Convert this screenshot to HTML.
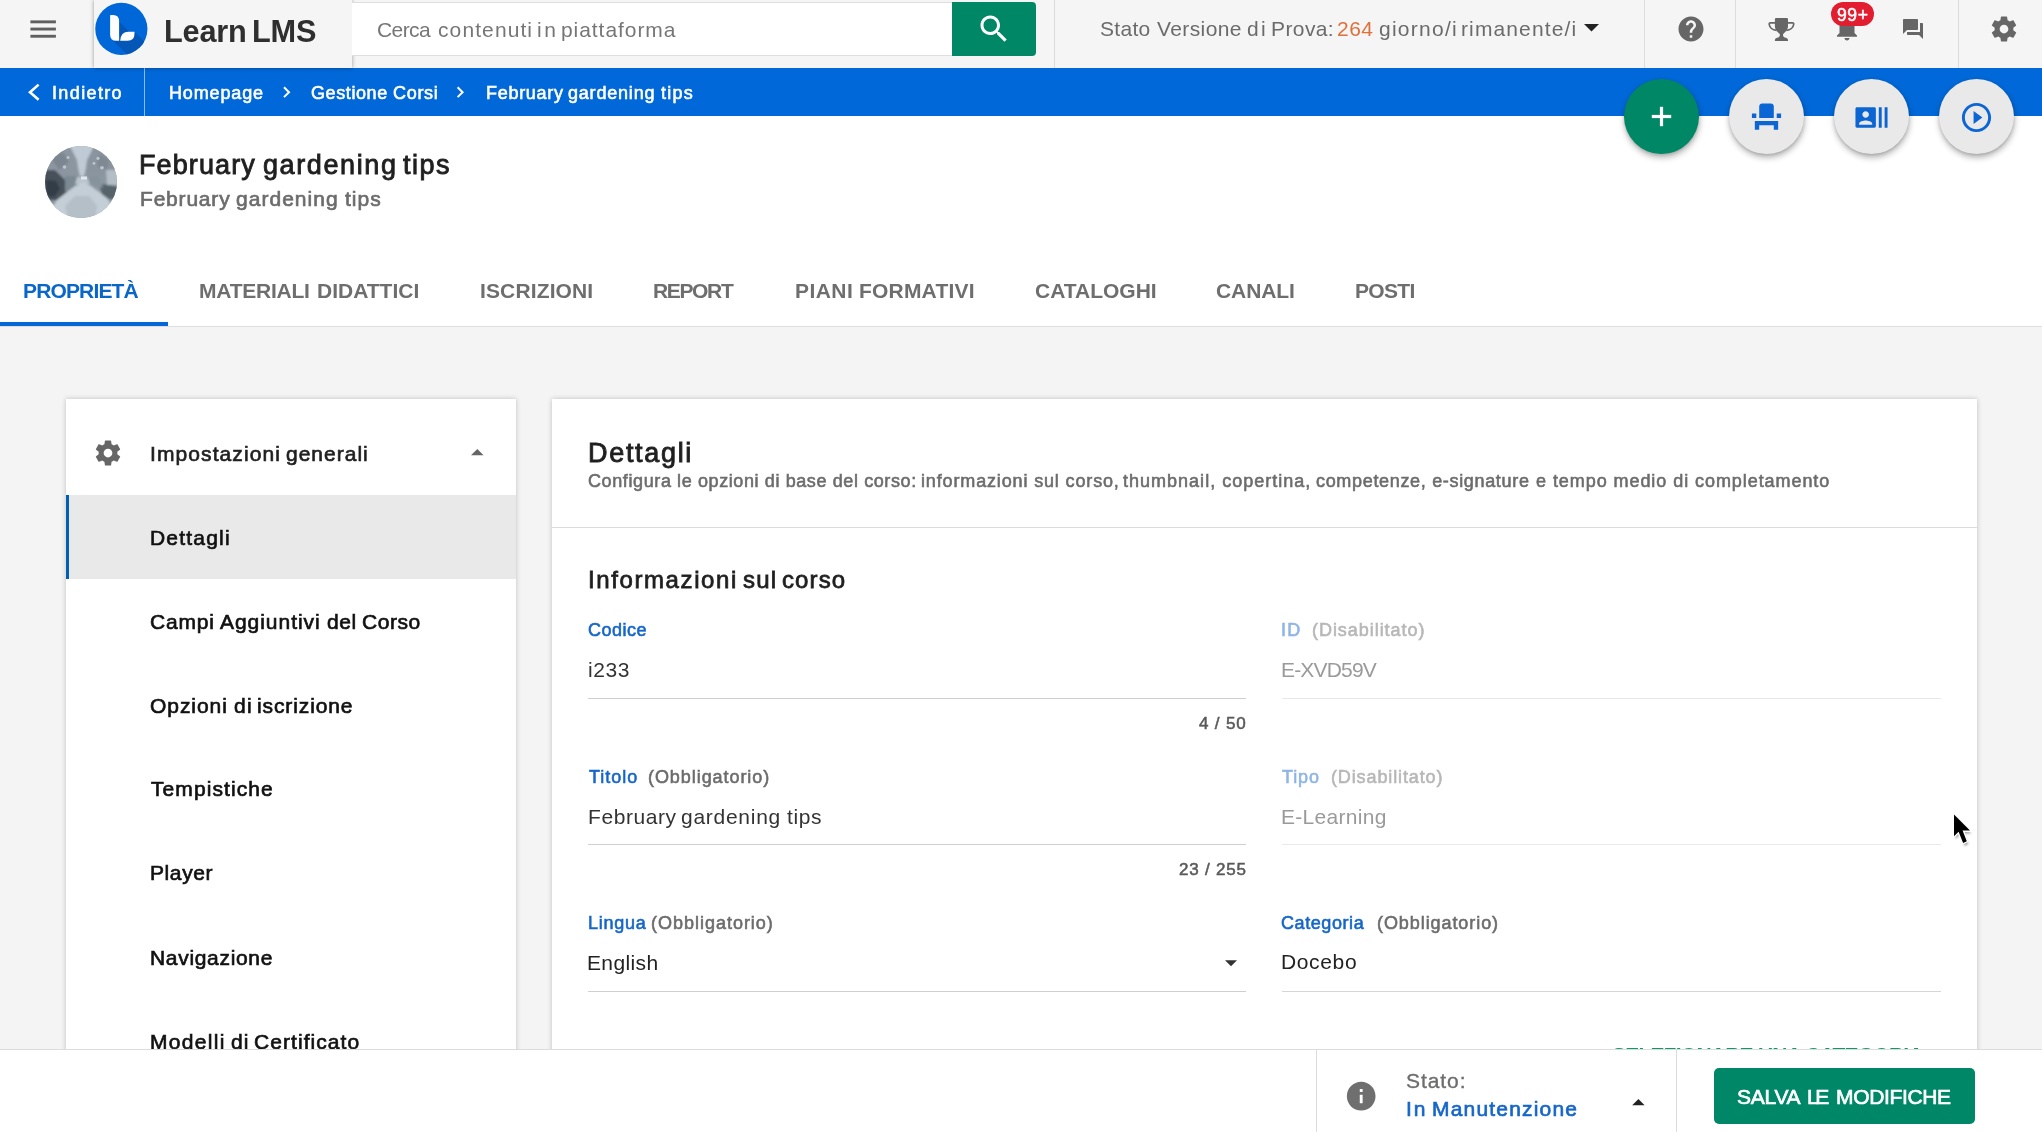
<!DOCTYPE html>
<html lang="it"><head><meta charset="utf-8"><title>Learn LMS</title>
<style>
html,body{margin:0;padding:0}
body{width:2042px;height:1132px;overflow:hidden;position:relative;background:#f4f4f4;font-family:"Liberation Sans",sans-serif}
.a{position:absolute}
.t{position:absolute;line-height:1;white-space:nowrap;will-change:transform}
svg{position:absolute;overflow:visible}
.vd{position:absolute;top:0;width:1px;height:68px;background:#dcdcdc}
.ul{position:absolute;height:1px;background:#cfcfcf}
.fab{position:absolute;width:75px;height:75px;border-radius:50%;background:#e9e9e9;box-shadow:0.5px 3.5px 6px rgba(0,0,0,.30),0 1px 3px rgba(0,0,0,.12);z-index:8}
.card{position:absolute;background:#fff;box-shadow:0 0 5px rgba(0,0,0,.22)}
</style></head>
<body>
<!-- white header -->
<div class="a" style="left:0;top:116px;width:2042px;height:210px;background:#fff"></div>
<div class="a" style="left:0;top:326px;width:2042px;height:1px;background:#dedede"></div>
<div class="a" style="left:0;top:322px;width:168px;height:4px;background:#0568d6"></div>

<!-- top bar -->
<div class="a" style="left:0;top:0;width:2042px;height:68px;background:#f5f5f5"></div>
<svg style="left:0;top:0" width="94" height="68"><rect x="30.4" y="20.4" width="25.5" height="2.9" fill="#606060"/><rect x="30.4" y="27.6" width="25.5" height="2.9" fill="#606060"/><rect x="30.4" y="34.8" width="25.5" height="2.9" fill="#606060"/></svg>
<!-- search -->
<div class="a" style="left:352px;top:2px;width:600px;height:52px;background:#fff;border-top:1px solid #dedede;border-bottom:1px solid #dedede;z-index:4"></div>
<div class="a" style="left:952px;top:2px;width:84px;height:54px;background:#008765;border-radius:0 4px 4px 0"></div>
<svg style="left:976px;top:10.5px" width="36" height="36" viewBox="0 0 24 24"><path fill="#fff" d="M15.5 14h-.79l-.28-.27C15.41 12.59 16 11.11 16 9.5 16 5.91 13.09 3 9.5 3S3 5.91 3 9.5 5.91 16 9.5 16c1.61 0 3.09-.59 4.23-1.57l.27.28v.79l5 4.99L20.49 19l-4.99-5zm-6 0C7.01 14 5 11.99 5 9.5S7.01 5 9.5 5 14 7.01 14 9.5 11.99 14 9.5 14z"/></svg>
<div class="vd" style="left:1054px"></div><div class="vd" style="left:1644px"></div><div class="vd" style="left:1735px"></div><div class="vd" style="left:1958px"></div>
<svg style="left:1583.9px;top:24px" width="15" height="7.6" viewBox="0 0 10 5"><path d="M0 0h10L5 5z" fill="#222"/></svg>
<!-- help -->
<svg style="left:1675.7px;top:13.9px" width="30" height="30" viewBox="0 0 24 24"><path fill="#666" d="M12 2C6.48 2 2 6.48 2 12s4.48 10 10 10 10-4.48 10-10S17.52 2 12 2zm1 17h-2v-2h2v2zm2.07-7.75l-.9.92C13.45 12.9 13 13.5 13 15h-2v-.5c0-1.1.45-2.1 1.17-2.83l1.24-1.26c.37-.36.59-.86.59-1.41 0-1.1-.9-2-2-2s-2 .9-2 2H8c0-2.21 1.79-4 4-4s4 1.79 4 4c0 .88-.36 1.68-.93 2.25z"/></svg>
<!-- trophy -->
<svg style="left:1768px;top:17.8px" width="27" height="23.2" viewBox="0 0 27 23.2"><path fill="#666" d="M8.100 .1H18.800Q20 .1 20 1.300V8C20 12 17 14 15.300 16C14.700 17 15 18.500 16.200 19.300L18.500 20.100Q20 20.600 20 22V23.100H6.900V22Q6.900 20.600 8.400 20.100L10.700 19.300C11.900 18.500 12.200 17 11.600 16C9.900 14 6.900 12 6.900 8V1.300Q6.900 .1 8.100 .1Z"/><path fill="none" stroke="#666" stroke-width="1.700" d="M7.200 4.900H2.300Q1.100 4.900 1.200 6.200C1.500 9.500 4.500 12 8.600 12.300M19.700 4.900H24.600Q25.800 4.900 25.700 6.200C25.400 9.500 22.400 12 18.300 12.300"/></svg>
<!-- bell -->
<svg style="left:1832px;top:13.3px" width="30" height="30" viewBox="0 0 24 24"><path fill="#666" d="M12 22c1.1 0 2-.9 2-2h-4c0 1.100.89 2 2 2zm6-6v-5c0-3.070-1.640-5.640-4.500-6.320V4c0-.83-.67-1.500-1.500-1.500s-1.500.67-1.500 1.500v.68C7.630 5.360 6 7.920 6 11v5l-2 2v1h16v-1l-2-2z"/></svg>
<div class="a" style="left:1831px;top:2px;width:43px;height:24px;border-radius:12px;background:#e11d2f;z-index:5"></div>
<!-- chat -->
<svg style="left:1901px;top:17px" width="24" height="24" viewBox="0 0 24 24"><path fill="#666" d="M21 6h-2v9H6v2c0 .55.45 1 1 1h11l4 4V7c0-.55-.45-1-1-1zm-4 6V3c0-.55-.45-1-1-1H3c-.55 0-1 .45-1 1v14l4-4h10c.55 0 1-.45 1-1z"/></svg>
<!-- gear -->
<svg style="left:1988.9px;top:13.9px" width="30" height="30" viewBox="0 0 24 24"><path fill="#666" d="M19.430 12.980c.04-.32.07-.64.07-.98s-.03-.66-.07-.98l2.110-1.650c.19-.15.24-.42.12-.64l-2-3.460c-.12-.22-.39-.3-.61-.22l-2.490 1c-.52-.4-1.080-.73-1.690-.98l-.38-2.650C14.460 2.180 14.250 2 14 2h-4c-.25 0-.46.18-.49.42l-.38 2.650c-.61.25-1.170.59-1.690.98l-2.490-1c-.23-.09-.49 0-.61.22l-2 3.460c-.13.22-.07.49.12.64l2.110 1.650c-.04.32-.07.65-.07.98s.03.66.07.98l-2.110 1.650c-.19.15-.24.42-.12.64l2 3.460c.12.22.39.3.61.22l2.490-1c.52.4 1.080.73 1.690.98l.38 2.650c.03.24.24.42.49.42h4c.25 0 .46-.18.49-.42l.38-2.650c.61-.25 1.170-.59 1.690-.98l2.490 1c.23.09.49 0 .61-.22l2-3.460c.12-.22.07-.49-.12-.64l-2.110-1.650zM12 15.500c-1.930 0-3.500-1.570-3.500-3.500s1.570-3.500 3.500-3.500 3.500 1.570 3.500 3.500-1.570 3.500-3.500 3.500z"/></svg>

<!-- blue bar -->
<div class="a" style="left:0;top:68px;width:2042px;height:48px;background:#0068d8"></div>
<div class="a" style="left:144px;top:68px;width:1px;height:48px;background:rgba(255,255,255,.55)"></div>
<svg style="left:0;top:68px" width="720" height="48" viewBox="0 68 720 48" fill="none" stroke="#fff" stroke-width="2.600"><path d="M38.600 84.600L30 92.200l8.600 7.600"/><path d="M284 87.300l5 4.900-5 4.900" stroke-width="2"/><path d="M457.600 87.300l5 4.900-5 4.900" stroke-width="2"/></svg>

<!-- logo panel -->
<div class="a" style="left:94px;top:0;width:258px;height:68px;background:#f5f5f5;box-shadow:0 0 4px rgba(0,0,0,.38);z-index:3"></div>
<svg style="left:94px;top:0;z-index:4" width="60" height="60" viewBox="94 0 60 60">
<defs><clipPath id="lc"><circle cx="121.350" cy="28.900" r="26.100"/></clipPath></defs>
<circle cx="121.350" cy="28.900" r="26.100" fill="#0067d8"/>
<path clip-path="url(#lc)" fill="#0557b7" d="M119.100 21.500L129.300 31.700H134.500L154 51.200V62H134.500L111.500 39z"/>
<path fill="#fdfeff" d="M110.100 15.800q0-.7.700-.7h2.300q6 0 6 6.400v19.300h-3q-6 0-6-6.300z"/>
<path fill="#fdfeff" d="M134.500 31.700v1.800q0 7.300-7 7.300h-7.300q.5-9.100 8.300-9.100z"/>
</svg>

<!-- avatar -->
<svg style="left:45px;top:146px" width="72" height="72" viewBox="0 0 72 72">
<defs><clipPath id="ac"><circle cx="36" cy="36" r="36"/></clipPath><filter id="bl" x="-20%" y="-20%" width="140%" height="140%"><feGaussianBlur stdDeviation="1.100"/></filter><filter id="b2" x="-20%" y="-20%" width="140%" height="140%"><feGaussianBlur stdDeviation="0.600"/></filter></defs>
<g clip-path="url(#ac)"><rect width="72" height="72" fill="#8c97a2"/>
<g filter="url(#bl)">
<path d="M22 -2H52L44 14 39 30H35L31 14z" fill="#bfcad5"/>
<path d="M-2 6L24 -2 32 14 34 30 20 34 4 26z" fill="#8c96a1"/>
<path d="M74 8L50 -2 42 14 40 28 56 30 70 24z" fill="#8a949f"/>
<path d="M6 12l12-6 6 10-10 8z" fill="#7b8691"/>
<path d="M54 8l10 6-2 10-10-4z" fill="#7e8994"/>
<path d="M-2 24L10 24 20 34 22 46 12 54-2 54z" fill="#46515a"/>
<path d="M1 34l10 1 4 8-6 8-8-2z" fill="#333e46"/>
<path d="M20 30l12 0 0 10-12 6z" fill="#7c8892"/>
<path d="M61 24L74 24 74 40 62 40z" fill="#b4bec6"/>
<path d="M54 38L74 40 74 54 58 52z" fill="#57636b"/>
<path d="M42 30l12 0 4 12-14-4z" fill="#87939c"/>
<path d="M32 31h10l3 7H30z" fill="#b9c4cc"/>
<path d="M38 36L30 40 12 54 4 66 14 80H60L70 64 62 52 46 40z" fill="#c4ced6"/>
<path d="M30 50L20 60 24 74H50L52 60 44 50z" fill="#b4bfc8"/>
</g>
<g filter="url(#b2)" fill="#bcc6cf"><circle cx="23" cy="11.600" r="1.500"/><circle cx="19.500" cy="21" r="1.800"/><circle cx="53" cy="12.300" r="1.600"/><circle cx="49" cy="17.400" r="1.400"/><circle cx="57" cy="21.700" r="1.800"/><rect x="36" y="30.500" width="6" height="3" fill="#e2e9ee"/></g>
</g></svg>

<!-- FABs -->
<div class="fab" style="left:1624px;top:79px;background:#008765"></div>
<div class="fab" style="left:1729px;top:79px"></div>
<div class="fab" style="left:1834px;top:79px"></div>
<div class="fab" style="left:1939px;top:79px"></div>
<svg style="left:1624px;top:79px;z-index:9" width="75" height="75"><rect x="27.800" y="35.900" width="19.400" height="3.200" fill="#fff"/><rect x="35.900" y="27.800" width="3.200" height="19.400" fill="#fff"/></svg>
<svg style="left:1749px;top:99.400px;z-index:9" width="35" height="35" viewBox="0 0 24 24"><path fill="#0b66d4" d="M4 18v3h3v-3h10v3h3v-6H4zm15-8h3v3h-3zM2 10h3v3H2zm15 3H7V5c0-1.100.9-2 2-2h6c1.100 0 2 .9 2 2v8z"/></svg>
<svg style="left:1854.200px;top:99.600px;z-index:9" width="35" height="35" viewBox="0 0 24 24"><path fill="#0b66d4" d="M21 5v14h2V5h-2zm-4 14h2V5h-2v14zM14 5H2c-.55 0-1 .45-1 1v12c0 .55.45 1 1 1h12c.55 0 1-.45 1-1V6c0-.55-.45-1-1-1zM8 7.750c1.240 0 2.250 1.010 2.250 2.250S9.240 12.250 8 12.250 5.750 11.240 5.750 10 6.760 7.750 8 7.750zM12.500 17h-9v-.75c0-1.500 3-2.250 4.500-2.250s4.500.75 4.500 2.250V17z"/></svg>
<svg style="left:1959px;top:99.500px;z-index:9" width="35" height="35" viewBox="0 0 24 24"><path fill="#0b66d4" d="M10 16.500l6-4.500-6-4.500v9zM12 2C6.480 2 2 6.480 2 12s4.480 10 10 10 10-4.480 10-10S17.520 2 12 2zm0 18c-4.410 0-8-3.590-8-8s3.590-8 8-8 8 3.590 8 8-3.590 8-8 8z"/></svg>

<!-- cards -->
<div class="card" style="left:66px;top:399px;width:450px;height:760px"></div>
<div class="a" style="left:66px;top:495px;width:450px;height:84px;background:#e9e9e9"></div>
<div class="a" style="left:66px;top:495px;width:3px;height:84px;background:#005fb2"></div>
<svg style="left:92.900px;top:437.700px" width="30" height="30" viewBox="0 0 24 24"><path fill="#666" d="M19.430 12.980c.04-.32.07-.64.07-.98s-.03-.66-.07-.98l2.110-1.650c.19-.15.24-.42.12-.64l-2-3.460c-.12-.22-.39-.3-.61-.22l-2.490 1c-.52-.4-1.080-.73-1.690-.98l-.38-2.650C14.460 2.180 14.250 2 14 2h-4c-.25 0-.46.18-.49.42l-.38 2.650c-.61.25-1.170.59-1.690.98l-2.490-1c-.23-.09-.49 0-.61.22l-2 3.460c-.13.22-.07.49.12.64l2.110 1.650c-.04.32-.07.65-.07.98s.03.66.07.98l-2.110 1.650c-.19.15-.24.42-.12.640l2 3.460c.12.22.39.3.61.22l2.490-1c.52.4 1.080.73 1.690.98l.38 2.650c.03.24.24.42.49.42h4c.25 0 .46-.18.49-.42l.38-2.650c.61-.25 1.170-.59 1.690-.98l2.490 1c.23.09.49 0 .61-.22l2-3.460c.12-.22.07-.49-.12-.64l-2.110-1.650zM12 15.500c-1.930 0-3.500-1.570-3.500-3.500s1.570-3.500 3.500-3.500 3.500 1.570 3.500 3.500-1.570 3.500-3.500 3.500z"/></svg>
<svg style="left:470.700px;top:448.800px" width="12.600" height="6.400" viewBox="0 0 10 5"><path d="M0 5h10L5 0z" fill="#666"/></svg>

<div class="card" style="left:552px;top:399px;width:1425px;height:760px"></div>
<div class="a" style="left:552px;top:527px;width:1425px;height:1px;background:#dcdcdc"></div>
<div class="ul" style="left:588px;top:698px;width:658px"></div>
<div class="ul" style="left:588px;top:844px;width:658px"></div>
<div class="ul" style="left:588px;top:991px;width:658px"></div>
<div class="ul" style="left:1282px;top:698px;width:659px;background:#e9e9e9"></div>
<div class="ul" style="left:1282px;top:844px;width:659px;background:#e9e9e9"></div>
<div class="ul" style="left:1282px;top:991px;width:659px;background:#d6d6d6"></div>
<svg style="left:1225px;top:960px" width="12" height="6.300" viewBox="0 0 10 5"><path d="M0 0h10L5 5z" fill="#333"/></svg>
<span class="t" style="left:149.8px;top:443px;font-size:21px;letter-spacing:1.091px;color:#1f1f1f;font-weight:400;-webkit-text-stroke:0.67px currentColor;">Impostazioni</span>
<span class="t" style="left:286.3px;top:443px;font-size:21px;letter-spacing:1.0px;color:#1f1f1f;font-weight:400;-webkit-text-stroke:0.67px currentColor;">generali</span>
<span class="t" style="left:149.6px;top:527px;font-size:21px;letter-spacing:1.2px;color:#111111;font-weight:400;-webkit-text-stroke:0.67px currentColor;">Dettagli</span>
<span class="t" style="left:149.6px;top:611px;font-size:21px;letter-spacing:0.8px;color:#111111;font-weight:400;-webkit-text-stroke:0.67px currentColor;">Campi</span>
<span class="t" style="left:220.1px;top:611px;font-size:21px;letter-spacing:0.956px;color:#111111;font-weight:400;-webkit-text-stroke:0.67px currentColor;">Aggiuntivi</span>
<span class="t" style="left:326.6px;top:611px;font-size:21px;letter-spacing:0.6px;color:#111111;font-weight:400;-webkit-text-stroke:0.67px currentColor;">del</span>
<span class="t" style="left:362.3px;top:611px;font-size:21px;letter-spacing:0.55px;color:#111111;font-weight:400;-webkit-text-stroke:0.67px currentColor;">Corso</span>
<span class="t" style="left:149.6px;top:695px;font-size:21px;letter-spacing:0.933px;color:#111111;font-weight:400;-webkit-text-stroke:0.67px currentColor;">Opzioni</span>
<span class="t" style="left:233.6px;top:695px;font-size:21px;letter-spacing:1.2px;color:#111111;font-weight:400;-webkit-text-stroke:0.67px currentColor;">di</span>
<span class="t" style="left:256.5px;top:695px;font-size:21px;letter-spacing:0.889px;color:#111111;font-weight:400;-webkit-text-stroke:0.67px currentColor;">iscrizione</span>
<span class="t" style="left:150.6px;top:778px;font-size:21px;letter-spacing:1.08px;color:#111111;font-weight:400;-webkit-text-stroke:0.67px currentColor;">Tempistiche</span>
<span class="t" style="left:149.6px;top:862px;font-size:21px;letter-spacing:0.6px;color:#111111;font-weight:400;-webkit-text-stroke:0.67px currentColor;">Player</span>
<span class="t" style="left:149.6px;top:947px;font-size:21px;letter-spacing:0.68px;color:#111111;font-weight:400;-webkit-text-stroke:0.67px currentColor;">Navigazione</span>
<span class="t" style="left:149.8px;top:1031px;font-size:21px;letter-spacing:1.3px;color:#111111;font-weight:400;-webkit-text-stroke:0.67px currentColor;">Modelli</span>
<span class="t" style="left:230.7px;top:1031px;font-size:21px;letter-spacing:1.0px;color:#111111;font-weight:400;-webkit-text-stroke:0.67px currentColor;">di</span>
<span class="t" style="left:254.4px;top:1031px;font-size:21px;letter-spacing:1.06px;color:#111111;font-weight:400;-webkit-text-stroke:0.67px currentColor;">Certificato</span>
<span class="t" style="left:588.0px;top:440px;font-size:27px;letter-spacing:1.686px;color:#1f1f1f;font-weight:400;-webkit-text-stroke:0.86px currentColor;">Dettagli</span>
<span class="t" style="left:588.3px;top:472px;font-size:18px;letter-spacing:0.605px;color:#6c6c6c;font-weight:400;-webkit-text-stroke:0.58px currentColor;">Configura le opzioni di base del corso:</span>
<span class="t" style="left:920.6px;top:472px;font-size:18px;letter-spacing:0.854px;color:#6c6c6c;font-weight:400;-webkit-text-stroke:0.58px currentColor;">informazioni sul corso,</span>
<span class="t" style="left:1123.2px;top:472px;font-size:18px;letter-spacing:1.01px;color:#6c6c6c;font-weight:400;-webkit-text-stroke:0.58px currentColor;">thumbnail, copertina,</span>
<span class="t" style="left:1315.9px;top:472px;font-size:18px;letter-spacing:0.672px;color:#6c6c6c;font-weight:400;-webkit-text-stroke:0.58px currentColor;">competenze, e-signature</span>
<span class="t" style="left:1535.9px;top:472px;font-size:18px;letter-spacing:0.937px;color:#6c6c6c;font-weight:400;-webkit-text-stroke:0.58px currentColor;">e tempo medio di completamento</span>
<span class="t" style="left:587.6px;top:568px;font-size:24px;letter-spacing:1.6px;color:#1f1f1f;font-weight:400;-webkit-text-stroke:0.77px currentColor;">Informazioni</span>
<span class="t" style="left:742.5px;top:568px;font-size:24px;letter-spacing:1.2px;color:#1f1f1f;font-weight:400;-webkit-text-stroke:0.77px currentColor;">sul</span>
<span class="t" style="left:781.9px;top:568px;font-size:24px;letter-spacing:1.1px;color:#1f1f1f;font-weight:400;-webkit-text-stroke:0.77px currentColor;">corso</span>
<span class="t" style="left:587.6px;top:621px;font-size:18px;letter-spacing:0.52px;color:#1566c9;font-weight:400;-webkit-text-stroke:0.58px currentColor;">Codice</span>
<span class="t" style="left:588.0px;top:659px;font-size:21px;letter-spacing:0.6px;color:#333333;font-weight:400;">i233</span>
<span class="t" style="left:1199.2px;top:715px;font-size:17px;letter-spacing:0.84px;color:#5a5a5a;font-weight:400;-webkit-text-stroke:0.54px currentColor;">4 / 50</span>
<span class="t" style="left:588.6px;top:768px;font-size:18px;letter-spacing:1.0px;color:#1566c9;font-weight:400;-webkit-text-stroke:0.58px currentColor;">Titolo</span>
<span class="t" style="left:648.3px;top:768px;font-size:18px;letter-spacing:0.939px;color:#6c6c6c;font-weight:400;-webkit-text-stroke:0.58px currentColor;">(Obbligatorio)</span>
<span class="t" style="left:587.5px;top:806px;font-size:21px;letter-spacing:0.571px;color:#333333;font-weight:400;">February</span>
<span class="t" style="left:680.9px;top:806px;font-size:21px;letter-spacing:0.725px;color:#333333;font-weight:400;">gardening</span>
<span class="t" style="left:786.5px;top:806px;font-size:21px;letter-spacing:0.6px;color:#333333;font-weight:400;">tips</span>
<span class="t" style="left:1179.0px;top:861px;font-size:17px;letter-spacing:0.8px;color:#5a5a5a;font-weight:400;-webkit-text-stroke:0.54px currentColor;">23 / 255</span>
<span class="t" style="left:587.6px;top:914px;font-size:18px;letter-spacing:0.72px;color:#1566c9;font-weight:400;-webkit-text-stroke:0.58px currentColor;">Lingua</span>
<span class="t" style="left:651.3px;top:914px;font-size:18px;letter-spacing:0.984px;color:#6c6c6c;font-weight:400;-webkit-text-stroke:0.58px currentColor;">(Obbligatorio)</span>
<span class="t" style="left:587.0px;top:952px;font-size:21px;letter-spacing:0.367px;color:#222222;font-weight:400;">English</span>
<span class="t" style="left:1281.4px;top:621px;font-size:18px;letter-spacing:1.2px;color:#8fb4e6;font-weight:400;-webkit-text-stroke:0.58px currentColor;">ID</span>
<span class="t" style="left:1311.8px;top:621px;font-size:18px;letter-spacing:0.954px;color:#b7b7b7;font-weight:400;-webkit-text-stroke:0.58px currentColor;">(Disabilitato)</span>
<span class="t" style="left:1281.4px;top:659px;font-size:21px;letter-spacing:-0.828px;color:#9a9a9a;font-weight:400;">E-XVD59V</span>
<span class="t" style="left:1282.4px;top:768px;font-size:18px;letter-spacing:0.867px;color:#8fb4e6;font-weight:400;-webkit-text-stroke:0.58px currentColor;">Tipo</span>
<span class="t" style="left:1331.0px;top:768px;font-size:18px;letter-spacing:0.877px;color:#b7b7b7;font-weight:400;-webkit-text-stroke:0.58px currentColor;">(Disabilitato)</span>
<span class="t" style="left:1281.4px;top:806px;font-size:21px;letter-spacing:0.289px;color:#9a9a9a;font-weight:400;">E-Learning</span>
<span class="t" style="left:1281.4px;top:914px;font-size:18px;letter-spacing:0.574px;color:#1566c9;font-weight:400;-webkit-text-stroke:0.58px currentColor;">Categoria</span>
<span class="t" style="left:1376.8px;top:914px;font-size:18px;letter-spacing:0.924px;color:#6c6c6c;font-weight:400;-webkit-text-stroke:0.58px currentColor;">(Obbligatorio)</span>
<span class="t" style="left:1281.4px;top:951px;font-size:21px;letter-spacing:0.64px;color:#222222;font-weight:400;">Docebo</span>
<span class="t" style="left:1612.4px;top:1044px;font-size:21px;letter-spacing:-0.775px;color:#0a9a6e;font-weight:700;">SELEZIONARE UNA CATEGORIA</span>

<!-- footer -->
<div class="a" style="left:0;top:1049px;width:2042px;height:83px;background:#fff;border-top:1px solid #dcdcdc;z-index:20"></div>
<div class="a" style="left:1316px;top:1050px;width:1px;height:82px;background:#dcdcdc;z-index:21"></div>
<div class="a" style="left:1676px;top:1050px;width:1px;height:82px;background:#dcdcdc;z-index:21"></div>
<svg style="left:1343.800px;top:1078.900px;z-index:21" width="34.400" height="34.400" viewBox="0 0 24 24"><path fill="#6f6f6f" d="M12 2C6.480 2 2 6.480 2 12s4.480 10 10 10 10-4.480 10-10S17.520 2 12 2zm1 15h-2v-6h2v6zm0-8h-2V7h2v2z"/></svg>
<svg style="left:1632px;top:1099px;z-index:21" width="12.800" height="6.200" viewBox="0 0 10 5"><path d="M0 5h10L5 0z" fill="#222"/></svg>
<div class="a" style="left:1714px;top:1068px;width:261px;height:56px;border-radius:5px;background:#008767;z-index:21"></div>

<span class="t" style="left:163.8px;top:17px;font-size:30.7px;letter-spacing:-0.2px;color:#2f2f2f;font-weight:700;z-index:6;">Learn</span>
<span class="t" style="left:252.1px;top:17px;font-size:30.7px;letter-spacing:-0.2px;color:#2f2f2f;font-weight:700;z-index:6;">LMS</span>
<span class="t" style="left:377.3px;top:19px;font-size:21px;letter-spacing:-0.6px;color:#767676;font-weight:400;z-index:6;">Cerca</span>
<span class="t" style="left:437.8px;top:19px;font-size:21px;letter-spacing:1.101px;color:#767676;font-weight:400;z-index:6;">contenuti</span>
<span class="t" style="left:536.7px;top:19px;font-size:21px;letter-spacing:2.6px;color:#767676;font-weight:400;z-index:6;">in</span>
<span class="t" style="left:560.8px;top:19px;font-size:21px;letter-spacing:0.94px;color:#767676;font-weight:400;z-index:6;">piattaforma</span>
<span class="t" style="left:1099.9px;top:18px;font-size:21px;letter-spacing:0.3px;color:#6b6b6b;font-weight:400;">Stato</span>
<span class="t" style="left:1156.8px;top:18px;font-size:21px;letter-spacing:0.4px;color:#6b6b6b;font-weight:400;">Versione</span>
<span class="t" style="left:1247.0px;top:18px;font-size:21px;letter-spacing:2.4px;color:#6b6b6b;font-weight:400;">di</span>
<span class="t" style="left:1270.5px;top:18px;font-size:21px;letter-spacing:0.4px;color:#6b6b6b;font-weight:400;">Prova:</span>
<span class="t" style="left:1337.3px;top:18px;font-size:21px;letter-spacing:0.5px;color:#e0703a;font-weight:400;">264</span>
<span class="t" style="left:1378.7px;top:18px;font-size:21px;letter-spacing:1.258px;color:#6b6b6b;font-weight:400;">giorno/i</span>
<span class="t" style="left:1461.2px;top:18px;font-size:21px;letter-spacing:1.12px;color:#6b6b6b;font-weight:400;">rimanente/i</span>
<span class="t" style="left:1837.3px;top:7px;font-size:17.5px;letter-spacing:0.6px;color:#ffffff;font-weight:400;-webkit-text-stroke:0.56px currentColor;z-index:6;">99+</span>
<span class="t" style="left:52.0px;top:84px;font-size:18px;letter-spacing:1.371px;color:#ffffff;font-weight:400;-webkit-text-stroke:0.58px currentColor;">Indietro</span>
<span class="t" style="left:169.1px;top:84px;font-size:18px;letter-spacing:0.857px;color:#ffffff;font-weight:400;-webkit-text-stroke:0.58px currentColor;">Homepage</span>
<span class="t" style="left:311.1px;top:84px;font-size:18px;letter-spacing:0.6px;color:#ffffff;font-weight:400;-webkit-text-stroke:0.58px currentColor;">Gestione</span>
<span class="t" style="left:392.6px;top:84px;font-size:18px;letter-spacing:0.7px;color:#ffffff;font-weight:400;-webkit-text-stroke:0.58px currentColor;">Corsi</span>
<span class="t" style="left:485.5px;top:84px;font-size:18px;letter-spacing:0.714px;color:#ffffff;font-weight:400;-webkit-text-stroke:0.58px currentColor;">February</span>
<span class="t" style="left:568.4px;top:84px;font-size:18px;letter-spacing:0.8px;color:#ffffff;font-weight:400;-webkit-text-stroke:0.58px currentColor;">gardening</span>
<span class="t" style="left:660.8px;top:84px;font-size:18px;letter-spacing:1.266px;color:#ffffff;font-weight:400;-webkit-text-stroke:0.58px currentColor;">tips</span>
<span class="t" style="left:138.8px;top:152px;font-size:27px;letter-spacing:1.114px;color:#1f1f1f;font-weight:400;-webkit-text-stroke:0.86px currentColor;">February</span>
<span class="t" style="left:263.0px;top:152px;font-size:27px;letter-spacing:1.6px;color:#1f1f1f;font-weight:400;-webkit-text-stroke:0.86px currentColor;">gardening</span>
<span class="t" style="left:403.1px;top:152px;font-size:27px;letter-spacing:1.466px;color:#1f1f1f;font-weight:400;-webkit-text-stroke:0.86px currentColor;">tips</span>
<span class="t" style="left:139.8px;top:188px;font-size:21px;letter-spacing:0.8px;color:#6c6c6c;font-weight:400;-webkit-text-stroke:0.67px currentColor;">February</span>
<span class="t" style="left:236.2px;top:188px;font-size:21px;letter-spacing:1.026px;color:#6c6c6c;font-weight:400;-webkit-text-stroke:0.67px currentColor;">gardening</span>
<span class="t" style="left:344.8px;top:188px;font-size:21px;letter-spacing:1.0px;color:#6c6c6c;font-weight:400;-webkit-text-stroke:0.67px currentColor;">tips</span>
<span class="t" style="left:22.5px;top:280px;font-size:21px;letter-spacing:-0.85px;color:#0b66c9;font-weight:700;">PROPRIETÀ</span>
<span class="t" style="left:198.8px;top:280px;font-size:21px;letter-spacing:-0.226px;color:#6e6e6e;font-weight:700;">MATERIALI</span>
<span class="t" style="left:317.1px;top:280px;font-size:21px;letter-spacing:-0.001px;color:#6e6e6e;font-weight:700;">DIDATTICI</span>
<span class="t" style="left:480.1px;top:280px;font-size:21px;letter-spacing:0.134px;color:#6e6e6e;font-weight:700;">ISCRIZIONI</span>
<span class="t" style="left:652.9px;top:280px;font-size:21px;letter-spacing:-1.36px;color:#6e6e6e;font-weight:700;">REPORT</span>
<span class="t" style="left:795.0px;top:280px;font-size:21px;letter-spacing:0.45px;color:#6e6e6e;font-weight:700;">PIANI</span>
<span class="t" style="left:858.9px;top:280px;font-size:21px;letter-spacing:0.201px;color:#6e6e6e;font-weight:700;">FORMATIVI</span>
<span class="t" style="left:1034.7px;top:280px;font-size:21px;letter-spacing:-0.001px;color:#6e6e6e;font-weight:700;">CATALOGHI</span>
<span class="t" style="left:1215.7px;top:280px;font-size:21px;letter-spacing:-0.08px;color:#6e6e6e;font-weight:700;">CANALI</span>
<span class="t" style="left:1354.5px;top:280px;font-size:21px;letter-spacing:-0.7px;color:#6e6e6e;font-weight:700;">POSTI</span>
<span class="t" style="left:1405.5px;top:1070px;font-size:21px;letter-spacing:0.92px;color:#6c6c6c;font-weight:400;-webkit-text-stroke:0.34px currentColor;z-index:21;">Stato:</span>
<span class="t" style="left:1406.1px;top:1098px;font-size:21px;letter-spacing:1.8px;color:#1566c9;font-weight:400;-webkit-text-stroke:0.67px currentColor;z-index:21;">In</span>
<span class="t" style="left:1431.6px;top:1098px;font-size:21px;letter-spacing:1.181px;color:#1566c9;font-weight:400;-webkit-text-stroke:0.67px currentColor;z-index:21;">Manutenzione</span>
<span class="t" style="left:1737.1px;top:1086px;font-size:21px;letter-spacing:-0.25px;color:#ffffff;font-weight:400;-webkit-text-stroke:0.67px currentColor;z-index:22;">SALVA</span>
<span class="t" style="left:1807.2px;top:1086px;font-size:21px;letter-spacing:-3.4px;color:#ffffff;font-weight:400;-webkit-text-stroke:0.67px currentColor;z-index:22;">LE</span>
<span class="t" style="left:1835.6px;top:1086px;font-size:21px;letter-spacing:-0.349px;color:#ffffff;font-weight:400;-webkit-text-stroke:0.67px currentColor;z-index:22;">MODIFICHE</span>

<!-- cursor -->
<svg style="left:1940px;top:805px;z-index:30" width="50" height="50" viewBox="1940 805 50 50"><defs><filter id="cs" x="-30%" y="-30%" width="170%" height="170%"><feGaussianBlur stdDeviation="1.200"/></filter></defs>
<path d="M1954 814.500V836.200L1958.600 831.800 1963.100 843 1966.800 841.200 1962.600 830.600H1970z" fill="#000" opacity=".35" filter="url(#cs)" transform="translate(1.500 3)"/>
<path d="M1954 814.500V836.200L1958.600 831.800 1963.100 843 1966.800 841.200 1962.600 830.600H1970z" fill="#000" stroke="#fff" stroke-width="2.600" stroke-linejoin="miter" paint-order="stroke"/></svg>
</body></html>
